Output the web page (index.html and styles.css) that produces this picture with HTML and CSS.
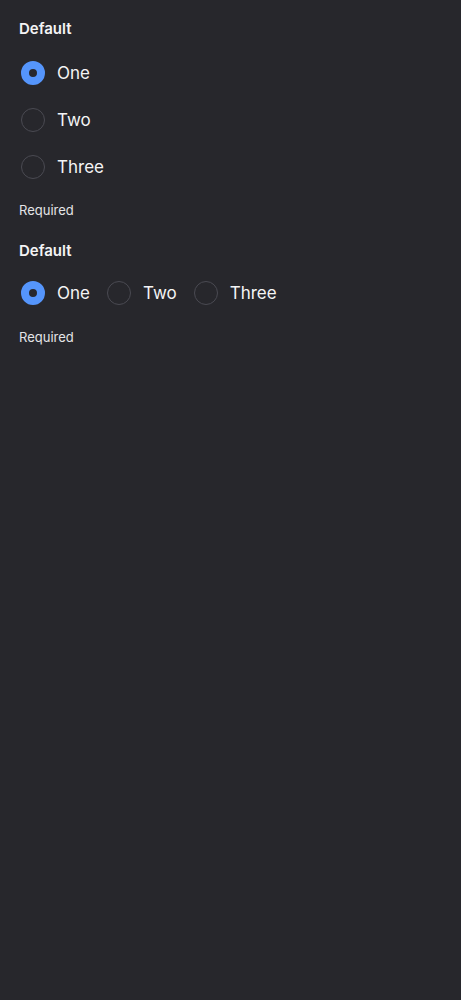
FILE: index.html
```
<!DOCTYPE html>
<html>
<head>
<meta charset="utf-8">
<link rel="stylesheet" href="styles.css">
</head>
<body>
<div class="page">
  <fieldset class="group group-vertical">
    <legend class="title">Default</legend>
    <div class="options vertical">
      <label class="option"><span class="radio checked"></span><span class="label">One</span></label>
      <label class="option"><span class="radio"></span><span class="label">Two</span></label>
      <label class="option"><span class="radio"></span><span class="label">Three</span></label>
    </div>
    <div class="hint">Required</div>
  </fieldset>
  <fieldset class="group group-horizontal">
    <legend class="title">Default</legend>
    <div class="options horizontal">
      <label class="option"><span class="radio checked"></span><span class="label">One</span></label>
      <label class="option"><span class="radio"></span><span class="label">Two</span></label>
      <label class="option"><span class="radio"></span><span class="label">Three</span></label>
    </div>
    <div class="hint">Required</div>
  </fieldset>
</div>
</body>
</html>
```
FILE: styles.css
```
html, body {
  margin: 0;
  padding: 0;
  background: #27272c;
  height: 100%;
}
body {
  font-family: Inter, "Noto Sans", sans-serif;
  color: #f4f4f5;
}
.page {
  padding: 19px 19px;
  display: flex;
  flex-direction: column;
  gap: 22px;
}
.group {
  border: 0;
  margin: 0;
  padding: 0;
  display: flex;
  flex-direction: column;
}
.title {
  padding: 0;
  font-size: 15px;
  font-weight: 600;
  line-height: 20px;
  margin-bottom: 14px;
  float: left;
}
.group-horizontal .title {
  margin-bottom: 12px;
}
.options {
  display: flex;
}
.options.vertical {
  flex-direction: column;
  gap: 7px;
}
.options.horizontal {
  flex-direction: row;
  gap: 17px;
}
.option {
  display: flex;
  align-items: center;
  gap: 12px;
  height: 40px;
  padding-left: 2px;
}
.options.horizontal .option + .option {
  padding-left: 0;
}
.radio {
  box-sizing: border-box;
  width: 24px;
  height: 24px;
  border-radius: 50%;
  border: 1px solid #4a4a52;
  flex: none;
}
.radio.checked {
  border: 8px solid #5595fb;
  background: #27272c;
}
.label {
  font-size: 17px;
  font-weight: 400;
  color: #f4f4f5;
}
.hint {
  margin-top: 14px;
  font-size: 13px;
  line-height: 18px;
  color: #e4e4e7;
}
.group-horizontal .hint {
  margin-top: 15px;
}
```
